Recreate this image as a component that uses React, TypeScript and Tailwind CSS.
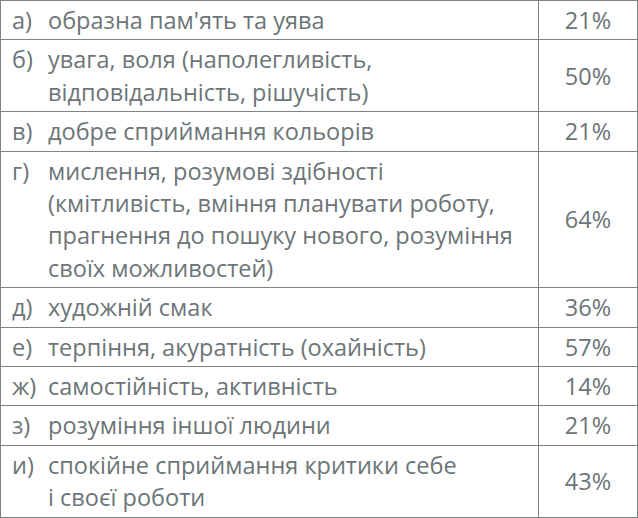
const ROWS: { mark: string; lines: string[]; value: string }[] = [
  { mark: "а)", lines: ["образна пам'ять та уява"], value: "21%" },
  {
    mark: "б)",
    lines: ["увага, воля (наполегливість,", "відповідальність, рішучість)"],
    value: "50%",
  },
  { mark: "в)", lines: ["добре сприймання кольорів"], value: "21%" },
  {
    mark: "г)",
    lines: [
      "мислення, розумові здібності",
      "(кмітливість, вміння планувати роботу,",
      "прагнення до пошуку нового, розуміння",
      "своїх можливостей)",
    ],
    value: "64%",
  },
  { mark: "д)", lines: ["художній смак"], value: "36%" },
  { mark: "е)", lines: ["терпіння, акуратність (охайність)"], value: "57%" },
  { mark: "ж)", lines: ["самостійність, активність"], value: "14%" },
  { mark: "з)", lines: ["розуміння іншої людини"], value: "21%" },
  {
    mark: "и)",
    lines: ["спокійне сприймання критики себе", "і своєї роботи"],
    value: "43%",
  },
];

export default function App() {
  return (
    <div className="w-[638px] bg-white font-['Open_Sans',sans-serif] text-[23.5px] leading-[32.4px] text-[#6c7577]">
      <table className="w-full border-collapse border border-[#7b8384]">
        <tbody>
          {ROWS.map((row) => (
            <tr key={row.mark} className="border-b border-[#7b8384]">
              <td className="py-[3px] pl-[11px] pr-2 align-top">
                <div className="flex">
                  <span className="w-[36px] shrink-0">{row.mark}</span>
                  <div className="flex flex-col whitespace-nowrap">
                    {row.lines.map((line) => (
                      <span key={line}>{line}</span>
                    ))}
                  </div>
                </div>
              </td>
              <td className="w-[99px] border-l border-[#7b8384] py-[3px] text-center align-middle">
                {row.value}
              </td>
            </tr>
          ))}
        </tbody>
      </table>
    </div>
  );
}
